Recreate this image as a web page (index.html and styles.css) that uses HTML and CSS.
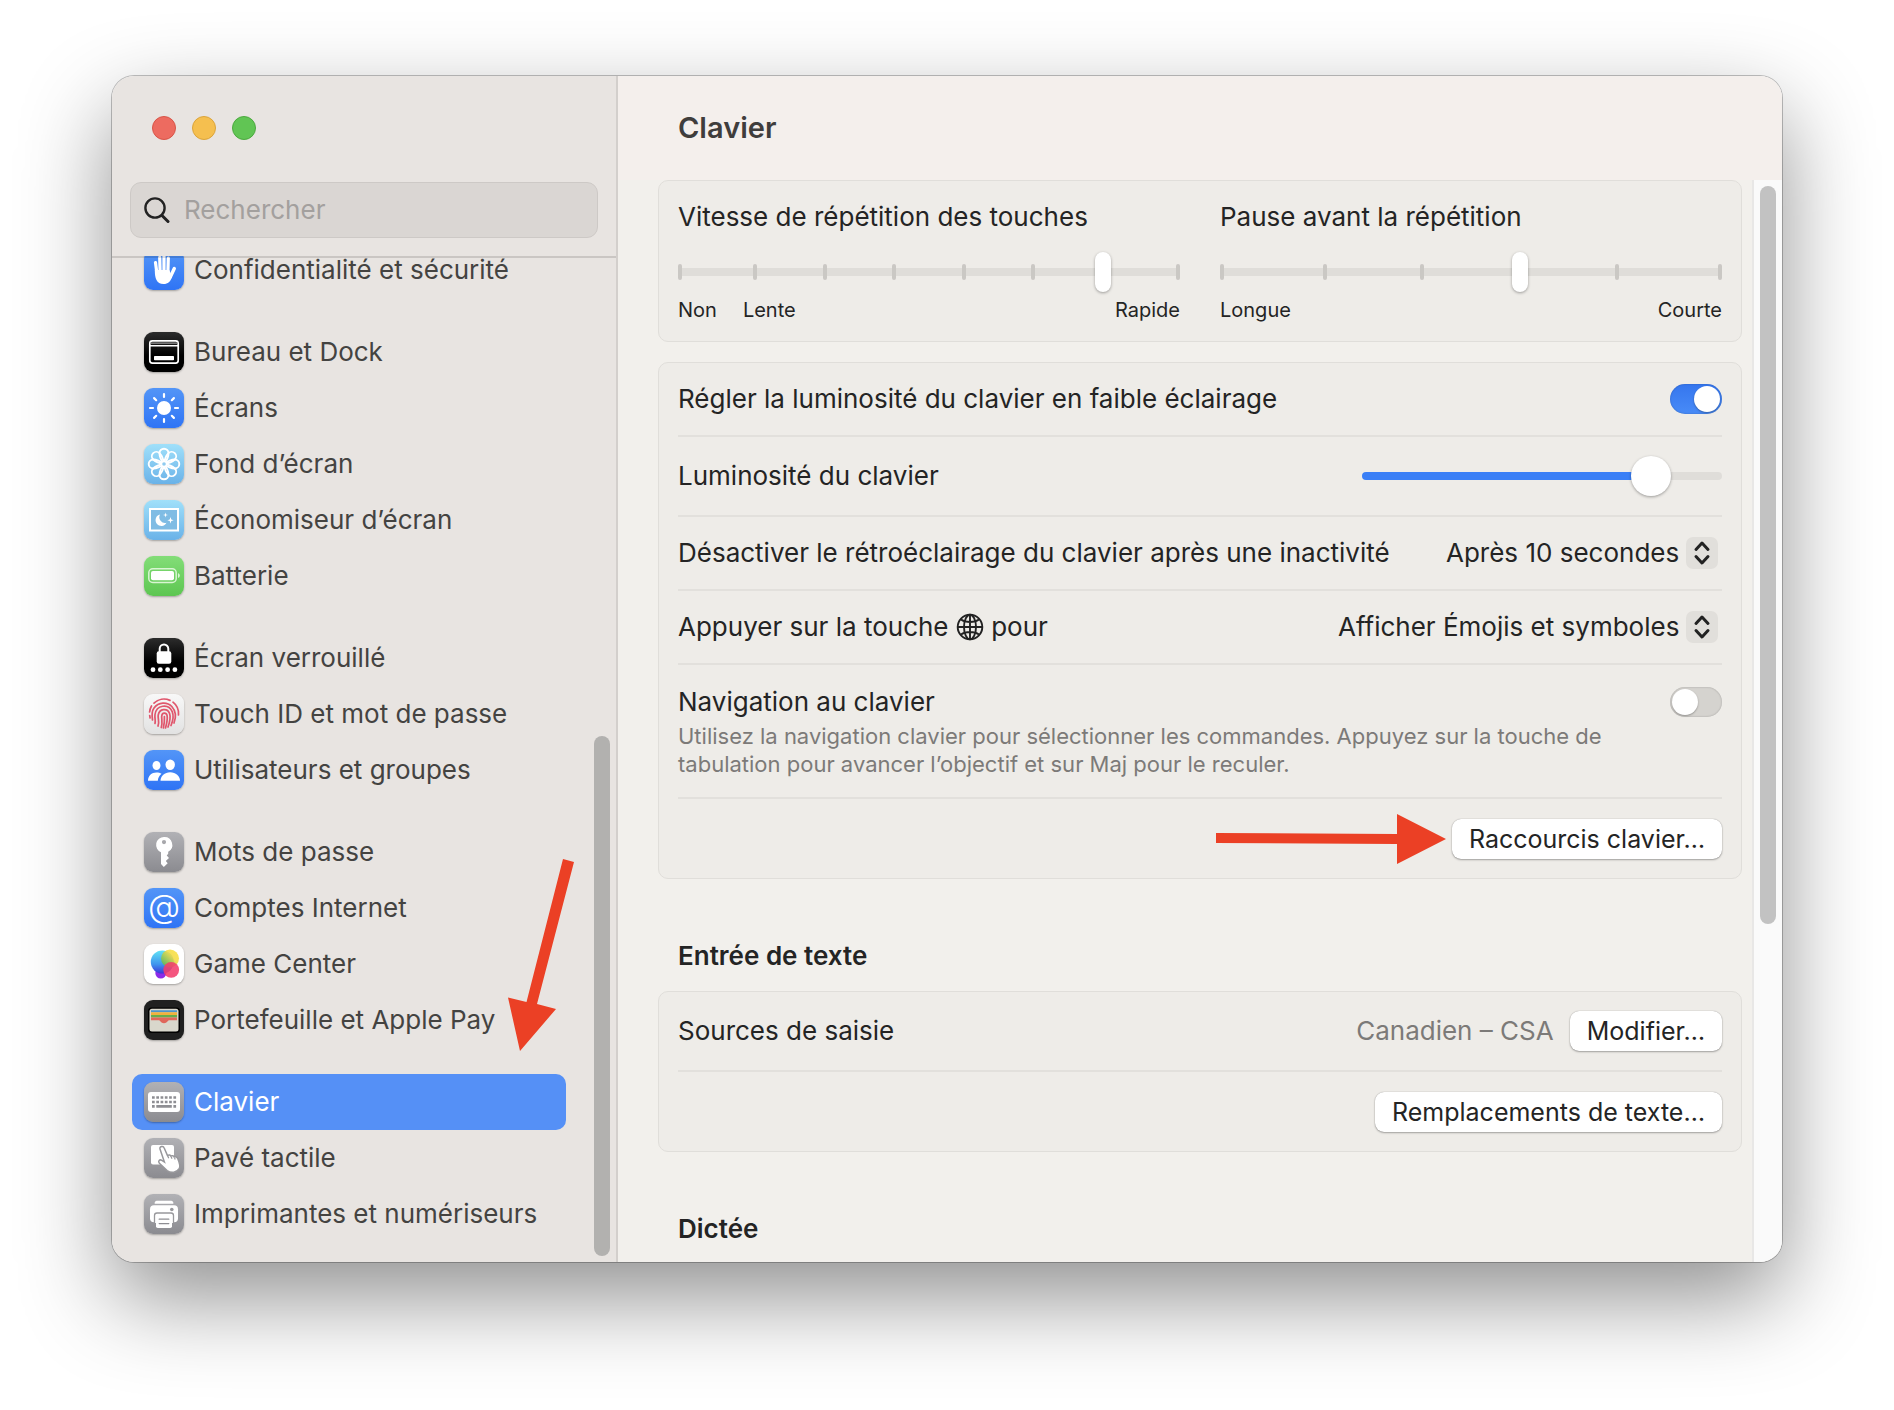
FILE: index.html
```
<!DOCTYPE html>
<html lang="fr">
<head>
  <meta charset="UTF-8">
  <meta name="viewport" content="width=device-width, initial-scale=1.0">
  <title>Clavier</title>
  <link rel="stylesheet" href="styles.css">
</head>
<body>
  <div class="window">
    <aside class="sidebar">
      <div class="sidebar-header">
        <div class="lights">
          <button class="light light-close" aria-label="Fermer"></button>
          <button class="light light-min" aria-label="Réduire"></button>
          <button class="light light-max" aria-label="Agrandir"></button>
        </div>
        <div class="search">
          <svg width="26" height="28" viewBox="0 0 26 28" fill="none" stroke="#222" stroke-width="2.4" stroke-linecap="round"><circle cx="11" cy="12" r="9.6"/><path d="M18 19.500l6 6" stroke-width="3"/></svg>
          <input type="search" placeholder="Rechercher" aria-label="Rechercher">
        </div>
      </div>

      <div class="sidebar-body">
        <nav class="nav">
          <ul class="nav-group">
            <li><a class="nav-item" href="#">
              <svg class="icon icon-blue" viewBox="0 0 40 40"><g stroke="#fff" stroke-width="3.2" stroke-linecap="round" fill="none"><path d="M11.500 12.500l1.300 10M15.700 7.500l.4 14M20 6v15M24.300 8l-.4 14"/><path d="M30.300 18.500l-4 8.500" stroke-width="3.4"/></g><path d="M10.800 20c0 8 1.600 14 8.700 14 4.500 0 7-2.600 8.500-7l-2.700-7z" fill="#fff"/></svg>
              <span>Confidentialité et sécurité</span></a></li>
          </ul>
          <ul class="nav-group">
            <li><a class="nav-item" href="#">
              <svg class="icon icon-black" viewBox="0 0 40 40"><rect x="5.800" y="8.800" width="28.400" height="22.400" rx="2.600" fill="none" stroke="#fff" stroke-width="1.700"/><path d="M6 11.200h28" stroke="#999" stroke-width="1.200"/><path d="M6 13.700h28" stroke="#fff" stroke-width="1.500"/><rect x="10" y="24" width="20" height="4.200" rx=".8" fill="#fff"/></svg>
              <span>Bureau et Dock</span></a></li>
            <li><a class="nav-item" href="#">
              <svg class="icon icon-blue" viewBox="0 0 40 40"><circle cx="20" cy="20" r="7" fill="#fff"/><path d="M20 9V6M20 34v-3M9 20H6M34 20h-3M12.200 12.200l-2.100-2.100M29.900 29.900l-2.100-2.100M12.200 27.800l-2.100 2.100M29.900 10.100l-2.100 2.100" stroke="#fff" stroke-width="2.200" stroke-linecap="round"/></svg>
              <span>Écrans</span></a></li>
            <li><a class="nav-item" href="#">
              <svg class="icon icon-sky" viewBox="0 0 40 40"><defs><path id="petal" d="M20 20C16.500 15.500 15.500 12.500 15.500 9.200a4.500 4.500 0 1 1 9 0C24.500 12.500 23.500 15.500 20 20z"/></defs><g fill="none" stroke="#fff" stroke-width="1.900"><use href="#petal"/><use href="#petal" transform="rotate(45 20 20)"/><use href="#petal" transform="rotate(90 20 20)"/><use href="#petal" transform="rotate(135 20 20)"/><use href="#petal" transform="rotate(180 20 20)"/><use href="#petal" transform="rotate(225 20 20)"/><use href="#petal" transform="rotate(270 20 20)"/><use href="#petal" transform="rotate(315 20 20)"/></g><circle cx="20" cy="20" r="1.800" fill="#8fcbf0"/></svg>
              <span>Fond d’écran</span></a></li>
            <li><a class="nav-item" href="#">
              <svg class="icon icon-sky" viewBox="0 0 40 40"><rect x="6" y="9" width="28" height="21.500" fill="#7fbce4" stroke="#fff" stroke-width="2"/><path d="M16 14.500a5.800 5.800 0 1 0 6.500 8.300 5.800 5.800 0 0 1-6.500-8.300z" fill="#fff"/><path d="M21.500 12.500l.6 1.900 1.900.6-1.900.6-.6 1.900-.6-1.900-1.900-.6 1.900-.6zM26.500 17l.8 2.400 2.400.8-2.400.8-.8 2.400-.8-2.400-2.400-.8 2.400-.8z" fill="#fff"/></svg>
              <span>Économiseur d’écran</span></a></li>
            <li><a class="nav-item" href="#">
              <svg class="icon icon-green" viewBox="0 0 40 40"><rect x="4.800" y="12.800" width="27.400" height="13.600" rx="4" fill="none" stroke="#d9f5d3" stroke-width="1.500"/><rect x="7" y="15" width="23" height="9.200" rx="2" fill="#fff"/><path d="M34 17.300c2.400.6 2.400 4 0 4.600z" fill="#d9f5d3"/></svg>
              <span>Batterie</span></a></li>
          </ul>
          <ul class="nav-group">
            <li><a class="nav-item" href="#">
              <svg class="icon icon-black" viewBox="0 0 40 40"><path d="M15.700 14v-3.200a4.300 4.300 0 0 1 8.600 0V14" fill="none" stroke="#fff" stroke-width="2"/><rect x="12.700" y="13.300" width="14.600" height="12.500" rx="2.200" fill="#fff"/><g fill="#fff"><circle cx="9" cy="31.700" r="2.400"/><circle cx="16.300" cy="31.700" r="2.400"/><circle cx="23.600" cy="31.700" r="2.400"/><circle cx="30.900" cy="31.700" r="2.400"/></g></svg>
              <span>Écran verrouillé</span></a></li>
            <li><a class="nav-item" href="#">
              <svg class="icon icon-light" viewBox="0 0 40 40"><g fill="none" stroke="#e0566c" stroke-width="1.700" stroke-linecap="round"><path d="M10 9.200a14.500 14.500 0 0 1 16-2.800M29 8.200A14.500 14.500 0 0 1 34.500 21M7.500 12A14.500 14.500 0 0 0 5.600 18M5.700 21.500l.4 2.500"/><path d="M8.500 26c-.8-5-1-8.500 1.500-12 4.500-6 13-6.500 17.800-1.500 4 4.500 4.700 10 2.200 16.500"/><path d="M11 29.500c.8-3-.5-5.500 0-9 1.400-9.500 13.500-11.500 17.200-2.800 1.800 4.300.7 9.300-1.200 13.800"/><path d="M14 32c1.800-3.600-.3-7 .2-10.800 1.100-6.800 9.300-7.400 11.400-1.700 1.400 4.200 0 9-1.600 13.500"/><path d="M17.300 33.500c1.400-3.800.3-8.400.4-11.300.3-4 4.700-4 5.400-.5.700 4-.4 8-1.600 12.300"/><path d="M20.400 22.500c.2 3.500 0 7-1 11.500"/></g></svg>
              <span>Touch ID et mot de passe</span></a></li>
            <li><a class="nav-item" href="#">
              <svg class="icon icon-blue" viewBox="0 0 40 40"><g fill="#fff"><ellipse cx="12.500" cy="15.500" rx="4" ry="4.500"/><path d="M4 30.800c0-5 3.500-8.300 8.500-8.300 2 0 3.700.4 5 1.200-2.300 1.800-3.500 4.300-3.700 7.100z"/><ellipse cx="26.200" cy="14.800" rx="4.700" ry="5.200"/><path d="M16.500 30.800c0-5 4.200-8.600 9.700-8.600s9.800 3.600 9.800 8.600z"/></g></svg>
              <span>Utilisateurs et groupes</span></a></li>
          </ul>
          <ul class="nav-group">
            <li><a class="nav-item" href="#">
              <svg class="icon icon-gray" viewBox="0 0 40 40"><path fill="#fff" fill-rule="evenodd" d="M20 5a7.900 7.900 0 0 0-3 15.200V32l2.800 3 3.900-3.800-1.900-2.200 3.200-3-2.300-2.600 1.500-1.700v-1.900A7.900 7.900 0 0 0 20 5zm0 3a2.100 2.100 0 1 1 0 4.200A2.100 2.100 0 0 1 20 8z"/></svg>
              <span>Mots de passe</span></a></li>
            <li><a class="nav-item" href="#">
              <svg class="icon icon-blue" viewBox="0 0 40 40"><text class="icon-at" x="20" y="30" text-anchor="middle">@</text></svg>
              <span>Comptes Internet</span></a></li>
            <li><a class="nav-item" href="#">
              <svg class="icon icon-white" viewBox="0 0 40 40"><defs><linearGradient id="gcBlue" x1="0" y1="0" x2="0" y2="1"><stop offset="0" stop-color="#62e3f5"/><stop offset=".6" stop-color="#4095ee"/><stop offset="1" stop-color="#3d35d8"/></linearGradient><linearGradient id="gcYellow" x1="1" y1="0" x2="0" y2="1"><stop offset="0" stop-color="#fbe13a"/><stop offset=".4" stop-color="#f3d93c"/><stop offset="1" stop-color="#3cb54d"/></linearGradient></defs><circle cx="16.800" cy="29" r="5.500" fill="#8d2be8"/><circle cx="18.300" cy="18" r="11.500" fill="url(#gcBlue)"/><circle cx="26" cy="14.500" r="9" fill="url(#gcYellow)" opacity=".85"/><circle cx="27.200" cy="25.800" r="7.900" fill="#f23d6d" opacity=".88"/></svg>
              <span>Game Center</span></a></li>
            <li><a class="nav-item" href="#">
              <svg class="icon icon-wallet" viewBox="0 0 40 40"><rect x="4" y="7.500" width="32" height="25.500" rx="3.500" fill="#000"/><rect x="5.500" y="8.800" width="29" height="22.800" rx="2.500" fill="#d9d7cc"/><path d="M7 10.300h26v2H7z" fill="#4b93c9"/><path d="M7 12.300h26v2.600H7z" fill="#f0b13e"/><path d="M7 14.900h26v2.500H7z" fill="#67ad4b"/><path d="M7 17.400h26v2.800h-8c-1.400 0-1.700 3-5 3s-3.600-3-5-3H7z" fill="#e0675b"/></svg>
              <span>Portefeuille et Apple Pay</span></a></li>
          </ul>
          <ul class="nav-group">
            <li><a class="nav-item active" href="#" aria-current="page">
              <svg class="icon icon-gray" viewBox="0 0 40 40"><rect x="4" y="10" width="32" height="20" rx="3" fill="#fff"/><g stroke="#8e8e93" stroke-width="2.600" fill="none"><path d="M8 15.500h24.100M8 20h24.100" stroke-dasharray="2.700 1.580"/><path d="M8 24.400h2.700M12.300 24.400h15.500M29.400 24.400h2.700"/></g></svg>
              <span>Clavier</span></a></li>
            <li><a class="nav-item" href="#">
              <svg class="icon icon-gray" viewBox="0 0 40 40"><rect x="7" y="7" width="23" height="19.500" rx="2" fill="#fff"/><path d="M16 11c-.6-2.600 3.300-3.600 4.200-1l3.300 7.500c1.400-1 2.900-.6 3.400.6 1.400-.8 2.800-.3 3.300 1 1.500-.7 2.900-.1 3.500 1.300 1.600 3.800 3 7.200 1.600 10-2.400 4.300-8.200 5.200-12.200 2.200l-7.700-7.300c-1.800-2.200.3-4.200 2.400-3l2.600 1.600z" fill="#fff" stroke="#97979b" stroke-width="1.500"/><path d="M23.700 17.700l1 2.600M27.200 18.700l.8 2M30.600 19.900l.6 1.600" stroke="#97979b" stroke-width="1.200"/></svg>
              <span>Pavé tactile</span></a></li>
            <li><a class="nav-item" href="#">
              <svg class="icon icon-gray" viewBox="0 0 40 40"><path d="M13 6.800h14a2.300 2.300 0 0 1 2.300 3H10.700a2.300 2.300 0 0 1 2.300-3z" fill="#fff"/><rect x="6" y="11.300" width="28" height="17" rx="4" fill="#fff"/><circle cx="27.800" cy="15.500" r="1.800" fill="#98989c"/><path d="M10.500 29v-7.500a2.500 2.500 0 0 1 2.500-2.500h14a2.500 2.500 0 0 1 2.500 2.500V29" fill="#fff" stroke="#98989c" stroke-width="1.300"/><rect x="12" y="20.800" width="16" height="13.200" rx="1.800" fill="#fff"/><path d="M15.200 25.200h9.600M15.200 29.600h9.600" stroke="#8e8e93" stroke-width="1.300" stroke-linecap="round"/></svg>
              <span>Imprimantes et numériseurs</span></a></li>
          </ul>
        </nav>
        <div class="sidebar-scroll"><div class="scroll-thumb"></div></div>
      </div>

      <svg class="arrow-down" width="66" height="192" viewBox="0 0 66 192" fill="#eb4025"><path d="M55 0l11 3-37 142 19 5-36 42L0 138.500l18.500 4.500z"/></svg>
    </aside>

    <main class="main">
      <header class="main-header"><h1>Clavier</h1></header>
      <div class="main-body">
        <div class="content">
          <section class="card card-sliders">
            <div class="field">
              <label for="vitesse">Vitesse de répétition des touches</label>
              <div class="stepper">
                <div class="ticks"><i></i><i></i><i></i><i></i><i></i><i></i><i></i><i></i></div>
                <input type="range" id="vitesse" min="0" max="7" value="6">
              </div>
              <div class="captions"><span>Non</span><span>Lente</span><span class="last">Rapide</span></div>
            </div>
            <div class="field">
              <label for="pause">Pause avant la répétition</label>
              <div class="stepper">
                <div class="ticks"><i></i><i></i><i></i><i></i><i></i><i></i></div>
                <input type="range" id="pause" min="0" max="5" value="3">
              </div>
              <div class="captions"><span>Longue</span><span class="last">Courte</span></div>
            </div>
          </section>

          <section class="card">
            <div class="row">
              <label for="auto">Régler la luminosité du clavier en faible éclairage</label>
              <input class="toggle" type="checkbox" id="auto" checked>
            </div>
            <div class="row row-tall">
              <label for="luminosite">Luminosité du clavier</label>
              <input class="brightness" type="range" id="luminosite" min="0" max="100" value="84">
            </div>
            <div class="row">
              <label for="inactivite">Désactiver le rétroéclairage du clavier après une inactivité</label>
              <div class="popup">
                <select id="inactivite"><option>Après 10 secondes</option></select>
                <svg class="chevrons" viewBox="0 0 32 32"><path d="M10 12.500l6-6.500 6 6.500M10 19.500l6 6.500 6-6.500"/></svg>
              </div>
            </div>
            <div class="row">
              <label class="globe-label" for="touche">Appuyer sur la touche
                <svg width="28" height="28" viewBox="0 0 28 28" fill="none" stroke="#222" stroke-width="1.900"><circle cx="14" cy="14" r="12.300"/><ellipse cx="14" cy="14" rx="6" ry="12.300"/><path d="M14 2v24M2 14h24M5 6.500c4.500 3.300 13.500 3.300 18 0M5 21.500c4.500-3.300 13.500-3.300 18 0"/></svg>
                pour</label>
              <div class="popup">
                <select id="touche"><option>Afficher Émojis et symboles</option></select>
                <svg class="chevrons" viewBox="0 0 32 32"><path d="M10 12.500l6-6.500 6 6.500M10 19.500l6 6.500 6-6.500"/></svg>
              </div>
            </div>
            <div class="row row-text">
              <div>
                <label for="navigation">Navigation au clavier</label>
                <p class="hint">Utilisez la navigation clavier pour sélectionner les commandes. Appuyez sur la touche de tabulation pour avancer l’objectif et sur Maj pour le reculer.</p>
              </div>
              <input class="toggle" type="checkbox" id="navigation">
            </div>
            <div class="row row-actions">
              <svg width="230" height="50" viewBox="0 0 230 50" fill="#eb4025"><path d="M0 19l181 1V0l49 25-49 25V30L0 29z"/></svg>
              <button class="btn">Raccourcis clavier…</button>
            </div>
          </section>

          <h2>Entrée de texte</h2>
          <section class="card">
            <div class="row row-tall">
              <span>Sources de saisie</span>
              <div class="source"><span class="value">Canadien – CSA</span><button class="btn">Modifier…</button></div>
            </div>
            <div class="row row-actions">
              <button class="btn">Remplacements de texte…</button>
            </div>
          </section>

          <h2>Dictée</h2>
        </div>
        <div class="main-scroll"><div class="scroll-thumb"></div></div>
      </div>
    </main>
  </div>
</body>
</html>
```
FILE: styles.css
```
* {
  box-sizing: border-box;
}

body {
  margin: 0;
  padding: 76px 112px 148px;
  height: 100vh;
  background: #fff;
  color: #242424;
  font-family: Inter, "Liberation Sans", sans-serif;
  font-size: 26px;
  line-height: 30px;
}

input,
select,
button {
  font: inherit;
  color: inherit;
}

.window {
  display: flex;
  height: 100%;
  border-radius: 22px;
  overflow: hidden;
  box-shadow: 0 0 0 1px rgba(0, 0, 0, 0.24), 0 36px 90px rgba(0, 0, 0, 0.44);
}

/* Barre latérale */

.sidebar {
  position: relative;
  display: flex;
  flex-direction: column;
  flex: none;
  width: 506px;
  background: #e8e4e1;
  border-right: 2px solid #d3cfcc;
}

.sidebar-header {
  position: relative;
  z-index: 1;
  flex: none;
  padding: 40px 18px 18px;
  border-bottom: 2px solid rgba(0, 0, 0, 0.13);
}

.lights {
  display: flex;
  gap: 16px;
  padding-left: 22px;
  margin-bottom: 42px;
}

.light {
  width: 24px;
  height: 24px;
  padding: 0;
  border: 1px solid;
  border-radius: 50%;
}

.light-close {
  background: #ed6b60;
  border-color: #d85548;
}

.light-min {
  background: #f5bf4f;
  border-color: #dba43b;
}

.light-max {
  background: #61c554;
  border-color: #4ca93f;
}

.search {
  display: flex;
  align-items: center;
  gap: 14px;
  height: 56px;
  padding: 0 13px;
  background: #dad6d3;
  border: 1px solid #cdc9c6;
  border-radius: 11px;
}

.search input {
  flex: 1;
  min-width: 0;
  padding: 0;
  border: 0;
  outline: 0;
  background: none;
}

.search input::placeholder {
  color: #a3a09e;
  opacity: 1;
}

.sidebar-body {
  display: flex;
  flex: 1;
  min-height: 0;
  margin-top: -2px;
}

.nav {
  display: flex;
  flex-direction: column;
  justify-content: flex-end;
  gap: 26px;
  flex: 1;
  overflow: hidden;
  padding: 0 28px 20px 20px;
}

.nav-group {
  flex: none;
  margin: 0;
  padding: 0;
  list-style: none;
}

.nav-item {
  display: flex;
  align-items: center;
  gap: 10px;
  height: 56px;
  padding: 0 12px;
  border-radius: 10px;
  color: #444341;
  text-decoration: none;
  white-space: nowrap;
}

.nav-item.active {
  background: #5590f6;
  color: #fff;
}

.icon {
  flex: none;
  width: 40px;
  height: 40px;
  border-radius: 9px;
  box-shadow: 0 1px 2px rgba(0, 0, 0, 0.3);
}

.icon-blue {
  background: linear-gradient(#5395f7, #2f74f5);
}

.icon-black {
  background: linear-gradient(#2c2c2c, #000 60%);
}

.icon-sky {
  background: linear-gradient(#a0e0fa, #6ab2e8);
}

.icon-green {
  background: linear-gradient(#83dd78, #5dc651);
}

.icon-gray {
  background: linear-gradient(#b1b1b5, #8b8b90);
}

.icon-light {
  background: linear-gradient(#f8f8f8, #e2e2e2);
}

.icon-white {
  background: #fff;
}

.icon-wallet {
  background: #202020;
}

.icon-at {
  fill: #fff;
  font-size: 33px;
  font-weight: 300;
}

.sidebar-scroll {
  display: flex;
  align-items: flex-end;
  width: 22px;
  padding: 0 6px 6px 0;
}

.scroll-thumb {
  width: 16px;
  border-radius: 8px;
  background: #c2c2c2;
}

.sidebar-scroll .scroll-thumb {
  height: 52%;
  background: #b2b1af;
}

.arrow-down {
  position: absolute;
  left: 396px;
  bottom: 211px;
}

/* Panneau principal */

.main {
  display: flex;
  flex-direction: column;
  flex: 1;
  min-width: 0;
  background: #f2f0ec;
}

.main-header {
  display: flex;
  align-items: center;
  flex: none;
  height: 104px;
  padding: 0 60px;
  background: #f4efec;
}

h1 {
  margin: 0;
  color: #3f3d3c;
  font-size: 29px;
  font-weight: 600;
}

.main-body {
  display: flex;
  flex: 1;
  min-height: 0;
}

.content {
  flex: 1;
  min-width: 0;
  overflow: hidden;
  padding: 0 10px 0 40px;
}

.main-scroll {
  width: 30px;
  padding: 6px;
  background: #fafafa;
  border-left: 2px solid #e8e7e6;
}

.main-scroll .scroll-thumb {
  height: 69%;
}

.card {
  margin-bottom: 20px;
  padding: 0 19px;
  background: #eeece8;
  border: 1px solid #e0deda;
  border-radius: 10px;
}

.card-sliders {
  display: grid;
  grid-template-columns: 1fr 1fr;
  gap: 40px;
  padding-top: 21px;
  padding-bottom: 18px;
}

.field {
  display: flex;
  flex-direction: column;
}

.stepper {
  display: grid;
  align-items: center;
  margin: 20px 0 5px;
}

.stepper > * {
  grid-area: 1 / 1;
}

.stepper input {
  appearance: none;
  width: 100%;
  height: 40px;
  margin: 0;
  background: none;
}

.stepper input::-webkit-slider-thumb {
  appearance: none;
  width: 16px;
  height: 40px;
  border-radius: 8px;
  background: #fff;
  box-shadow: 0 1px 3px rgba(0, 0, 0, 0.35);
}

/* Les crans intérieurs suivent les arrêts du curseur (16px de large) */
.ticks {
  display: flex;
  height: 16px;
  background: linear-gradient(#dfddd9, #dfddd9) center / 100% 8px no-repeat;
}

.ticks i {
  display: flex;
  flex: 2 0 0;
  justify-content: center;
}

.ticks i::before {
  content: "";
  width: 4px;
  border-radius: 2px;
  background: #cac8c4;
}

.ticks i:first-child,
.ticks i:last-child {
  flex: 1 0 8px;
  justify-content: flex-start;
}

.ticks i:last-child {
  justify-content: flex-end;
}

.captions {
  display: flex;
  gap: 26px;
  font-size: 20px;
  line-height: 26px;
}

.captions .last {
  margin-left: auto;
}

.row {
  display: flex;
  align-items: center;
  justify-content: space-between;
  min-height: 74px;
  border-bottom: 2px solid #e2e0dc;
}

.row:last-child {
  border-bottom: 0;
}

.row-tall {
  min-height: 80px;
}

.row-actions {
  justify-content: flex-end;
  gap: 6px;
  min-height: 79px;
}

.row-text {
  align-items: flex-start;
  padding: 22px 0 19px;
}

.hint {
  max-width: 960px;
  margin: 5px 0 0;
  color: #7c7a78;
  font-size: 22px;
  line-height: 28px;
}

.toggle {
  appearance: none;
  flex: none;
  width: 52px;
  height: 30px;
  margin: 0;
  padding: 2px;
  border-radius: 15px;
  background: #d5d3cf;
  box-shadow: inset 0 0 2px rgba(0, 0, 0, 0.25);
}

.toggle::before {
  content: "";
  display: block;
  width: 26px;
  height: 26px;
  border-radius: 50%;
  background: #fff;
  box-shadow: 0 1px 2px rgba(0, 0, 0, 0.3);
}

.toggle:checked {
  background: linear-gradient(#3576ee, #488bf7);
}

.toggle:checked::before {
  margin-left: auto;
}

.brightness {
  appearance: none;
  width: 360px;
  height: 40px;
  margin: 0;
  background: none;
}

.brightness::-webkit-slider-runnable-track {
  height: 8px;
  border-radius: 4px;
  background: linear-gradient(to right, #3a7ff6 80%, #dfddd9 80%);
}

.brightness::-webkit-slider-thumb {
  appearance: none;
  width: 40px;
  height: 40px;
  margin-top: -16px;
  border-radius: 50%;
  background: #fff;
  box-shadow: 0 1px 3px rgba(0, 0, 0, 0.35);
}

.popup {
  display: flex;
  align-items: center;
  gap: 6px;
  padding-right: 4px;
}

.popup select {
  appearance: none;
  padding: 0;
  border: 0;
  background: none;
}

.chevrons {
  width: 32px;
  height: 32px;
  border-radius: 7px;
  background: #e1dfdb;
  fill: none;
  stroke: #222;
  stroke-width: 3;
  stroke-linecap: round;
  stroke-linejoin: round;
}

.globe-label svg {
  vertical-align: -5px;
}

.btn {
  height: 40px;
  padding: 0 17px;
  border: 0;
  border-radius: 9px;
  background: #fff;
  box-shadow: 0 0 1px rgba(0, 0, 0, 0.35), 0 1px 2px rgba(0, 0, 0, 0.3);
  font-size: 25px;
}

.source {
  display: flex;
  align-items: center;
  gap: 16px;
}

.value {
  color: #7c7a78;
}

h2 {
  margin: 62px 20px 20px;
  font-size: 26px;
  font-weight: 600;
  line-height: 30px;
}
```
